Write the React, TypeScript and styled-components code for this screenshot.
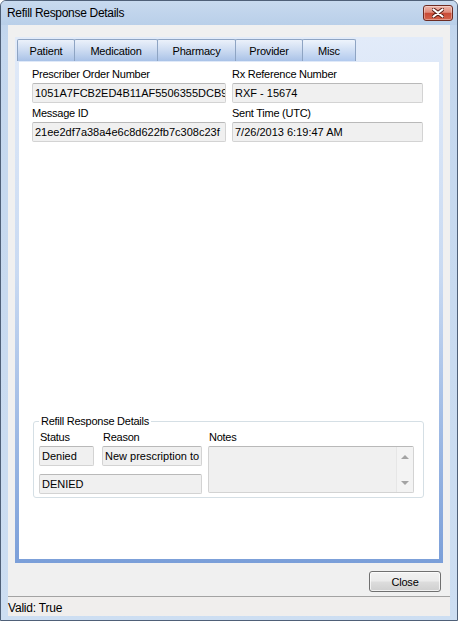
import React from "react";
import styled, { createGlobalStyle } from "styled-components";

const Global = createGlobalStyle`
  html, body { margin: 0; padding: 0; background: #ffffff; }
  body { font-family: "Liberation Sans", Arial, sans-serif; font-size: 11px; color: #000; }
  * { box-sizing: border-box; }
`;

const Window = styled.div`
  width: 458px;
  height: 621px;
  display: flex;
  flex-direction: column;
  border: 1px solid #4f6078;
  border-radius: 6px 6px 0 0;
  background: linear-gradient(to bottom, #bfd3eb 0px, #c4d7ee 40px, #cddef2 100%);
  overflow: hidden;
`;

const TitleBar = styled.div`
  height: 24px;
  flex: none;
  display: flex;
  align-items: center;
  justify-content: space-between;
  padding: 0 4px 0 6px;
  background: linear-gradient(to bottom, #c8daef, #b9cfe9);
`;

const TitleText = styled.span`
  font-size: 12px;
  letter-spacing: -0.3px;
  color: #000;
`;

const CloseX = styled.div`
  width: 30px;
  height: 16px;
  border: 1px solid #6d2b22;
  border-radius: 3px;
  display: flex;
  align-items: center;
  justify-content: center;
  background: linear-gradient(to bottom, #eeb6aa 0%, #df8b7b 45%, #c94a36 52%, #d4644d 100%);
  box-shadow: inset 0 0 0 1px rgba(255, 255, 255, 0.35);
`;

const Client = styled.div`
  flex: 1;
  display: flex;
  flex-direction: column;
  margin: 0 7px 4px 7px;
  background: #f0f0f0;
`;

const TabControl = styled.div`
  flex: 1;
  display: flex;
  flex-direction: column;
  margin: 12px 7px 0 7px;
  background: linear-gradient(to bottom, #e2ebf9 0%, #c9daf2 45%, #7b9fd9 100%);
`;

const TabStrip = styled.div`
  display: flex;
  padding: 2px 0 0 2px;
`;

const Tab = styled.div<{ $w: number; $active?: boolean }>`
  width: ${(p) => p.$w}px;
  height: 22px;
  margin-right: -1px;
  display: flex;
  align-items: center;
  justify-content: center;
  border: 1px solid #8ea4c3;
  border-bottom: none;
  border-radius: 2px 2px 0 0;
  letter-spacing: -0.2px;
  background: ${(p) =>
    p.$active
      ? "linear-gradient(to bottom, #eef4fc 0%, #d3e1f5 45%, #b2caee 100%)"
      : "linear-gradient(to bottom, #ebf1fa 0%, #cfddf2 45%, #a9c2e7 100%)"};
`;

const Panel = styled.div`
  flex: 1;
  display: flex;
  flex-direction: column;
  margin: 1px 4px 4px 4px;
  background: #ffffff;
  padding: 6px 16px 0 13px;
`;

const FieldGrid = styled.div`
  display: grid;
  grid-template-columns: 194px 191px;
  column-gap: 6px;
  row-gap: 4px;
`;

const Field = styled.div`
  display: flex;
  flex-direction: column;
`;

const Label = styled.div`
  line-height: 13px;
  height: 13px;
  margin-bottom: 2px;
  letter-spacing: -0.25px;
  white-space: nowrap;
`;

const TextBox = styled.div<{ $w?: number; $span?: number }>`
  height: 20px;
  width: ${(p) => (p.$w ? `${p.$w}px` : "100%")};
  ${(p) => (p.$span ? `grid-column: 1 / span ${p.$span};` : "")}
  display: flex;
  align-items: center;
  padding: 0 2px 0 2px;
  background: #f0f0f0;
  border: 1px solid #d3d3d3;
  border-top-color: #b9b9b9;
  border-radius: 2px;
  white-space: nowrap;
  overflow: hidden;
  letter-spacing: 0;
`;

const GroupBox = styled.fieldset`
  margin: auto -1px 61px 1px;
  padding: 3px 9px 3px 5px;
  border: 1px solid #d5dfe5;
  border-radius: 3px;
  min-width: 0;
`;

const Legend = styled.legend`
  padding: 0 2px;
  line-height: 13px;
  letter-spacing: -0.25px;
`;

const GroupGrid = styled.div`
  display: grid;
  grid-template-columns: 63px 106px 206px;
  grid-template-rows: 15px 28px 20px;
  align-items: start;
`;

const GroupLabel = styled.div`
  line-height: 13px;
  padding-left: 1px;
  letter-spacing: -0.25px;
`;

const Notes = styled.div`
  grid-column: 3;
  grid-row: 2 / span 2;
  height: 47px;
  display: flex;
  justify-content: flex-end;
  background: #f0f0f0;
  border: 1px solid #d3d3d3;
  border-top-color: #b9b9b9;
  border-radius: 2px;
`;

const ScrollBar = styled.div`
  width: 17px;
  height: 100%;
  display: flex;
  flex-direction: column;
  justify-content: space-between;
  align-items: center;
  padding: 8px 0 7px;
  background: #f3f3f3;
  border-left: 1px solid #e6e6e6;
`;

const Arrow = styled.div<{ $down?: boolean }>`
  width: 0;
  height: 0;
  border-left: 4px solid transparent;
  border-right: 4px solid transparent;
  ${(p) =>
    p.$down
      ? "border-top: 4px solid #a3a3a3;"
      : "border-bottom: 4px solid #a3a3a3;"}
`;

const Footer = styled.div`
  display: flex;
  justify-content: flex-end;
  padding: 8px 9px 4px 0;
`;

const Button = styled.button`
  width: 72px;
  height: 21px;
  font-family: "Liberation Sans", Arial, sans-serif;
  font-size: 11px;
  letter-spacing: -0.2px;
  color: #000;
  border: 1px solid #707070;
  border-radius: 3px;
  background: linear-gradient(to bottom, #f2f2f2 0%, #ebebeb 48%, #dddddd 52%, #cfcfcf 100%);
  box-shadow: inset 0 0 0 1px rgba(255, 255, 255, 0.7);
  padding: 0;
`;

const StatusBar = styled.div`
  height: 20px;
  display: flex;
  align-items: center;
  padding: 3px 0 0 0;
  border-top: 1px solid #a3a3a3;
  background: #f0eeed;
  font-size: 12px;
  letter-spacing: -0.2px;
`;

const tabs = [
  { label: "Patient", w: 58 },
  { label: "Medication", w: 84 },
  { label: "Pharmacy", w: 79 },
  { label: "Provider", w: 68 },
  { label: "Misc", w: 54, active: true },
];

const fields = [
  { label: "Prescriber Order Number", value: "1051A7FCB2ED4B11AF5506355DCB93A4" },
  { label: "Rx Reference Number", value: "RXF - 15674" },
  { label: "Message ID", value: "21ee2df7a38a4e6c8d622fb7c308c23f" },
  { label: "Sent Time (UTC)", value: "7/26/2013 6:19:47 AM" },
];

export default function App() {
  return (
    <>
      <Global />
      <Window>
        <TitleBar>
          <TitleText>Refill Response Details</TitleText>
          <CloseX>
            <svg width="12" height="10" viewBox="0 0 12 10">
              <path
                d="M1.5 1.5 L10.5 8.5 M10.5 1.5 L1.5 8.5"
                stroke="#5a1e16"
                strokeWidth="4"
                strokeLinecap="round"
              />
              <path
                d="M1.5 1.5 L10.5 8.5 M10.5 1.5 L1.5 8.5"
                stroke="#ffffff"
                strokeWidth="2.2"
                strokeLinecap="round"
              />
            </svg>
          </CloseX>
        </TitleBar>
        <Client>
          <TabControl>
            <TabStrip>
              {tabs.map((t) => (
                <Tab key={t.label} $w={t.w} $active={t.active}>
                  {t.label}
                </Tab>
              ))}
            </TabStrip>
            <Panel>
              <FieldGrid>
                {fields.map((f) => (
                  <Field key={f.label}>
                    <Label>{f.label}</Label>
                    <TextBox>{f.value}</TextBox>
                  </Field>
                ))}
              </FieldGrid>
              <GroupBox>
                <Legend>Refill Response Details</Legend>
                <GroupGrid>
                  <GroupLabel>Status</GroupLabel>
                  <GroupLabel>Reason</GroupLabel>
                  <GroupLabel>Notes</GroupLabel>
                  <TextBox $w={55}>Denied</TextBox>
                  <TextBox $w={100}>New prescription to follow</TextBox>
                  <Notes>
                    <ScrollBar>
                      <Arrow />
                      <Arrow $down />
                    </ScrollBar>
                  </Notes>
                  <TextBox $w={163} $span={2}>
                    DENIED
                  </TextBox>
                </GroupGrid>
              </GroupBox>
            </Panel>
          </TabControl>
          <Footer>
            <Button>Close</Button>
          </Footer>
          <StatusBar>Valid: True</StatusBar>
        </Client>
      </Window>
    </>
  );
}
